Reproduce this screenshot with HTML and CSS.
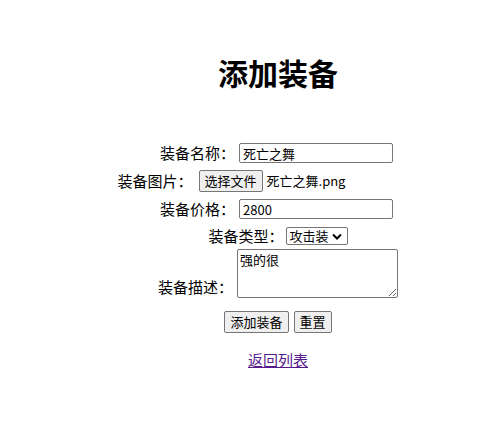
FILE: index.html
```html
<!DOCTYPE html>
<html lang="zh">
<head>
<meta charset="utf-8">
<title>添加装备</title>
<link rel="stylesheet" href="styles.css">
</head>
<body>
<div class="page">
  <h1 class="title">添加装备</h1>
  <form class="form">
    <div class="row r1">
      <label class="lbl">装备名称：</label>
      <input class="txt" type="text" value="死亡之舞">
    </div>
    <div class="row r2">
      <label class="lbl">装备图片：</label>
      <span class="file">
        <button type="button" class="btn">选择文件</button>
        <span class="fname">死亡之舞.png</span>
      </span>
    </div>
    <div class="row r3">
      <label class="lbl">装备价格：</label>
      <input class="txt" type="text" value="2800">
    </div>
    <div class="row r4">
      <label class="lbl">装备类型：</label>
      <span class="sel">
        <span class="sel-text">攻击装</span>
        <svg class="chev" width="10" height="7" viewBox="0 0 10 7"><path d="M1 1.5 L5 5.5 L9 1.5" fill="none" stroke="#000" stroke-width="2"/></svg>
      </span>
    </div>
    <div class="row r5">
      <label class="lbl lbl-bottom">装备描述：</label>
      <textarea class="area">强的很</textarea>
    </div>
    <div class="row r6">
      <button type="button" class="btn">添加装备</button>
      <button type="button" class="btn">重置</button>
    </div>
    <div class="row r7">
      <a class="back" href="#">返回列表</a>
    </div>
  </form>
</div>
</body>
</html>
```

FILE: styles.css
```css
html, body {
  margin: 0;
  padding: 0;
  overflow: hidden;
  background: #fff;
}
body {
  font-family: "Noto Sans CJK SC", "Noto Sans", sans-serif;
  font-size: 15px;
  color: #000;
}
.page {
  box-sizing: border-box;
  width: 485px;
  padding-left: 71px;
}
.title {
  margin: 0;
  padding-top: 53px;
  height: 38px;
  line-height: 38px;
  font-size: 30px;
  font-weight: 700;
  text-align: center;
}
.form {
  margin: 0;
  padding-top: 52px;
}
.row {
  display: flex;
  justify-content: center;
  align-items: center;
}
.lbl {
  line-height: 20px;
  white-space: nowrap;
}
.r1 { height: 20px; margin-left: -3px; }
.r2 { height: 22px; margin-top: 7px; }
.r3 { height: 20px; margin-top: 7px; margin-left: -3px; }
.r4 { height: 18px; margin-top: 8px; }
.r5 { margin-top: 4px; align-items: flex-end; }
.r6 { margin-top: 13px; gap: 5px; }
.r7 { margin-top: 17px; }

.txt {
  box-sizing: border-box;
  width: 154px;
  height: 20px;
  margin: 0 0 0 4px;
  padding: 0 3px;
  border: 1px solid #767676;
  border-radius: 2px;
  font-family: "Noto Sans CJK SC", "Noto Sans", sans-serif;
  font-size: 13px;
  color: #000;
  background: #fff;
  outline: none;
}
.file {
  display: flex;
  align-items: center;
  width: 240px;
  margin-left: 6px;
}
.btn {
  box-sizing: border-box;
  height: 22px;
  padding: 0 5px;
  margin: 0;
  border: 1px solid #767676;
  border-radius: 2px;
  background: #efefef;
  font-family: "Noto Sans CJK SC", "Noto Sans", sans-serif;
  font-size: 13px;
  line-height: 18px;
  color: #000;
}
.fname {
  margin-left: 4px;
  font-size: 13px;
  line-height: 18px;
  white-space: nowrap;
}
.sel {
  box-sizing: border-box;
  display: flex;
  align-items: center;
  gap: 3px;
  width: 62px;
  height: 18px;
  margin-left: 2px;
  padding: 0 2px 0 3px;
  border: 1px solid #767676;
  border-radius: 2px;
  background: #fff;
}
.sel-text {
  font-size: 13px;
  line-height: 16px;
  white-space: nowrap;
}
.chev { flex: none; }
.lbl-bottom { margin-bottom: 1px; margin-right: 4px; }
.area {
  box-sizing: border-box;
  width: 161px;
  height: 49px;
  margin: 0;
  padding: 1px 2px;
  border: 1px solid #767676;
  border-radius: 2px;
  font-family: "Noto Sans CJK SC", "Noto Sans", sans-serif;
  font-size: 13px;
  line-height: 17px;
  color: #000;
  resize: both;
  outline: none;
}
.back {
  color: #551a8b;
  text-decoration: underline;
  font-size: 15px;
  line-height: 20px;
}
```
